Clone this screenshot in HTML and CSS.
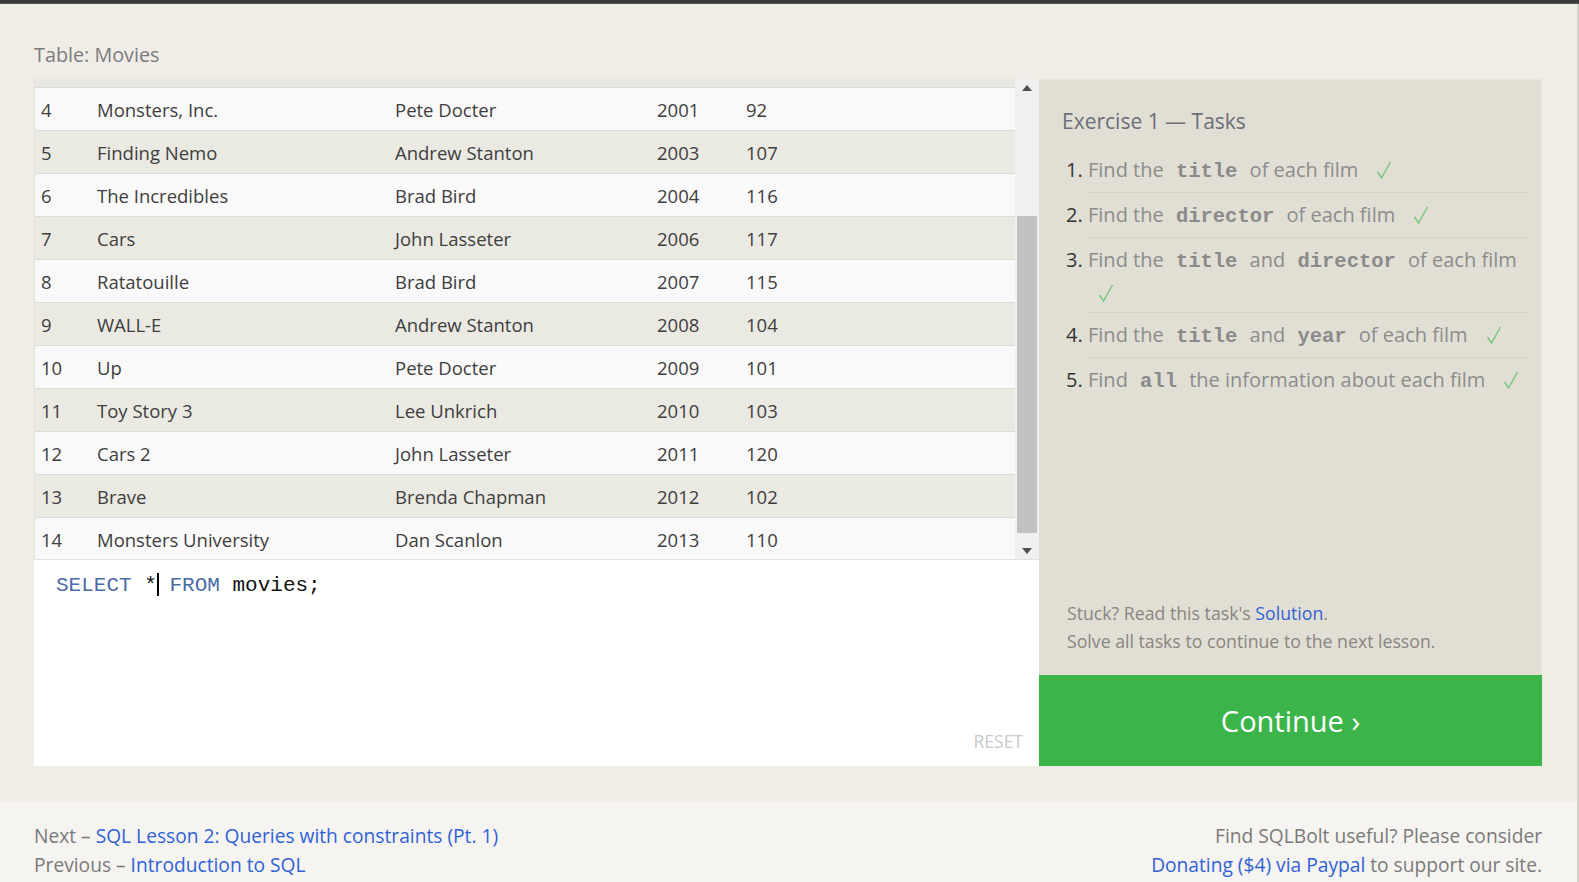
FILE: index.html
```html
<!DOCTYPE html>
<html lang="en">
<head>
<meta charset="utf-8">
<title>SQLBolt - Lesson 1</title>
<link rel="stylesheet" href="styles.css">
</head>
<body>
<div class="topbar"></div>
<div class="page">
  <main class="main">
    <h2 class="table-title">Table: Movies</h2>
    <div class="exercise">
      <div class="left">
        <div class="table-box">
          <div class="table-scroll">
            <div class="hidden-header"></div>
            <div class="row odd"><span>4</span><span>Monsters, Inc.</span><span>Pete Docter</span><span>2001</span><span>92</span></div>
            <div class="row even"><span>5</span><span>Finding Nemo</span><span>Andrew Stanton</span><span>2003</span><span>107</span></div>
            <div class="row odd"><span>6</span><span>The Incredibles</span><span>Brad Bird</span><span>2004</span><span>116</span></div>
            <div class="row even"><span>7</span><span>Cars</span><span>John Lasseter</span><span>2006</span><span>117</span></div>
            <div class="row odd"><span>8</span><span>Ratatouille</span><span>Brad Bird</span><span>2007</span><span>115</span></div>
            <div class="row even"><span>9</span><span>WALL-E</span><span>Andrew Stanton</span><span>2008</span><span>104</span></div>
            <div class="row odd"><span>10</span><span>Up</span><span>Pete Docter</span><span>2009</span><span>101</span></div>
            <div class="row even"><span>11</span><span>Toy Story 3</span><span>Lee Unkrich</span><span>2010</span><span>103</span></div>
            <div class="row odd"><span>12</span><span>Cars 2</span><span>John Lasseter</span><span>2011</span><span>120</span></div>
            <div class="row even"><span>13</span><span>Brave</span><span>Brenda Chapman</span><span>2012</span><span>102</span></div>
            <div class="row odd"><span>14</span><span>Monsters University</span><span>Dan Scanlon</span><span>2013</span><span>110</span></div>
          </div>
          <div class="scrollbar">
            <div class="arrow"><svg width="10" height="6" viewBox="0 0 10 6"><polygon points="0,6 10,6 5,0" fill="#505050"/></svg></div>
            <div class="track"><div class="thumb"></div></div>
            <div class="arrow"><svg width="10" height="6" viewBox="0 0 10 6"><polygon points="0,0 10,0 5,6" fill="#505050"/></svg></div>
          </div>
        </div>
        <div class="editor">
          <div class="code"><span class="kw">SELECT</span> *<span class="cursor"></span> <span class="kw">FROM</span> movies;</div>
          <div class="reset">RESET</div>
        </div>
      </div>
      <div class="right">
        <div class="tasks-panel">
          <h3 class="tasks-title">Exercise 1 — Tasks</h3>
          <ol class="tasks">
            <li>Find the <code>title</code> of each film<span class="check"><svg width="16" height="20" viewBox="0 0 16 20"><polyline points="1.5,12 5.5,18 14.5,2" fill="none" stroke="#74c47a" stroke-width="1.4"/></svg></span></li>
            <li>Find the <code>director</code> of each film<span class="check"><svg width="16" height="20" viewBox="0 0 16 20"><polyline points="1.5,12 5.5,18 14.5,2" fill="none" stroke="#74c47a" stroke-width="1.4"/></svg></span></li>
            <li>Find the <code>title</code> and <code>director</code> of each film<span class="check wrapped"><svg width="16" height="20" viewBox="0 0 16 20"><polyline points="1.5,12 5.5,18 14.5,2" fill="none" stroke="#74c47a" stroke-width="1.4"/></svg></span></li>
            <li>Find the <code>title</code> and <code>year</code> of each film<span class="check"><svg width="16" height="20" viewBox="0 0 16 20"><polyline points="1.5,12 5.5,18 14.5,2" fill="none" stroke="#74c47a" stroke-width="1.4"/></svg></span></li>
            <li>Find <code>all</code> the information about each film<span class="check"><svg width="16" height="20" viewBox="0 0 16 20"><polyline points="1.5,12 5.5,18 14.5,2" fill="none" stroke="#74c47a" stroke-width="1.4"/></svg></span></li>
          </ol>
          <div class="stuck">
            <div>Stuck? Read this task's <a href="#">Solution</a>.</div>
            <div>Solve all tasks to continue to the next lesson.</div>
          </div>
        </div>
        <a class="continue" href="#">Continue ›</a>
      </div>
    </div>
  </main>
  <footer class="footer">
    <div class="nav">
      <div>Next – <a href="#">SQL Lesson 2: Queries with constraints (Pt. 1)</a></div>
      <div>Previous – <a href="#">Introduction to SQL</a></div>
    </div>
    <div class="donate">
      <div>Find SQLBolt useful? Please consider</div>
      <div><a href="#">Donating ($4) via Paypal</a> to support our site.</div>
    </div>
  </footer>
</div>
</body>
</html>
```

FILE: styles.css
```css
* { box-sizing: border-box; }
html, body { margin: 0; padding: 0; }
body {
  background: #efede6;
  font-family: "Open Sans", "Noto Sans", sans-serif;
  color: #444;
}
a { color: #2f62d6; text-decoration: none; }

.topbar {
  height: 4px;
  background: #383838;
  border-bottom: 1px solid #555;
}

.page {
  border-right: 2px solid #d5d2ca;
}

.main {
  padding: 0 35px 36px 34px;
}

.table-title {
  margin: 0;
  padding-top: 37px;
  height: 75px;
  font-size: 19.8px;
  font-weight: normal;
  line-height: 28px;
  color: #7b7b7e;
}

.exercise {
  display: flex;
  height: 687px;
}

.left {
  width: 1005px;
  display: flex;
  flex-direction: column;
}

.table-box {
  height: 480px;
  display: flex;
  background: #e8e7e0;
}

.table-scroll {
  flex: 1;
  overflow: hidden;
  border-left: 1px solid #e2e1db;
}

.hidden-header {
  height: 8px;
  background: #e8e7e1;
}

.row {
  display: grid;
  grid-template-columns: 56px 298px 262px 89px 1fr;
  padding-left: 6px;
  height: 43px;
  align-items: center;
  border-top: 1px solid #dcdcd5;
  font-size: 18.5px;
  color: #3e3e3e;
}
.row.odd { background: #f9f9f9; }
.row.even { background: #eae9e2; }

.scrollbar {
  width: 24px;
  background: #f0f0f0;
  display: flex;
  flex-direction: column;
}
.arrow {
  height: 17px;
  display: flex;
  align-items: center;
  justify-content: center;
}
.track {
  flex: 1;
  padding: 0 2px;
}
.thumb {
  margin-top: 120px;
  height: 317px;
  background: #c1c1c1;
}

.editor {
  flex: 1;
  background: #fff;
  display: flex;
  flex-direction: column;
  padding: 13px 16px 12px 22px;
  border-top: 1px solid #e3e2dc;
}
.code {
  font-family: "Liberation Mono", "DejaVu Sans Mono", monospace;
  font-size: 21px;
  line-height: 26px;
  color: #111;
}
.kw { color: #4a6aa8; }
.cursor {
  display: inline-block;
  width: 2px;
  height: 23px;
  background: #000;
  vertical-align: -5px;
  margin-right: -2px;
}
.reset {
  margin-top: auto;
  align-self: flex-end;
  font-size: 17.5px;
  line-height: 26px;
  color: #c9c9c9;
}

.right {
  flex: 1;
  display: flex;
  flex-direction: column;
}
.tasks-panel {
  flex: 1;
  background: #e1dfd4;
  border-top: 1px solid #e6e4dc;
  border-right: 1px solid #e6e4dc;
  padding: 26px 11px 20px 23px;
  display: flex;
  flex-direction: column;
}
.tasks-title {
  margin: 0 0 12px;
  font-size: 21px;
  font-weight: normal;
  line-height: 30px;
  color: #6b6d78;
}
.tasks {
  margin: 0;
  padding-left: 26px;
  color: #333;
  font-size: 20px;
}
.tasks li {
  padding: 7px 0;
  line-height: 30px;
  border-bottom: 1px solid #d6d4c9;
  color: #8c8c8c;
}
.tasks li:last-child { border-bottom: none; }
.tasks li::marker { color: #333; }
.tasks code {
  font-family: "Liberation Mono", "DejaVu Sans Mono", monospace;
  font-weight: bold;
  font-size: 20.5px;
  line-height: 20px;
  color: #8a8a8a;
  padding: 0 7px;
}
.check {
  display: inline-block;
  margin-left: 18px;
  height: 20px;
  line-height: 0;
  vertical-align: -3px;
}
.check.wrapped {
  margin-left: 10px;
  vertical-align: -6px;
}
.check svg { display: block; }

.stuck {
  margin-top: auto;
  padding-left: 5px;
  font-size: 17.7px;
  line-height: 28px;
  color: #8a8580;
}

.continue {
  height: 91px;
  background: #3bb44a;
  color: #fff;
  font-size: 29px;
  display: flex;
  align-items: center;
  justify-content: center;
}

.footer {
  background: #f5f4f0;
  display: flex;
  justify-content: space-between;
  padding: 19px 35px 10px 34px;
  font-size: 19.2px;
  line-height: 29px;
  color: #7a7a7a;
}
.donate { text-align: right; }
```
